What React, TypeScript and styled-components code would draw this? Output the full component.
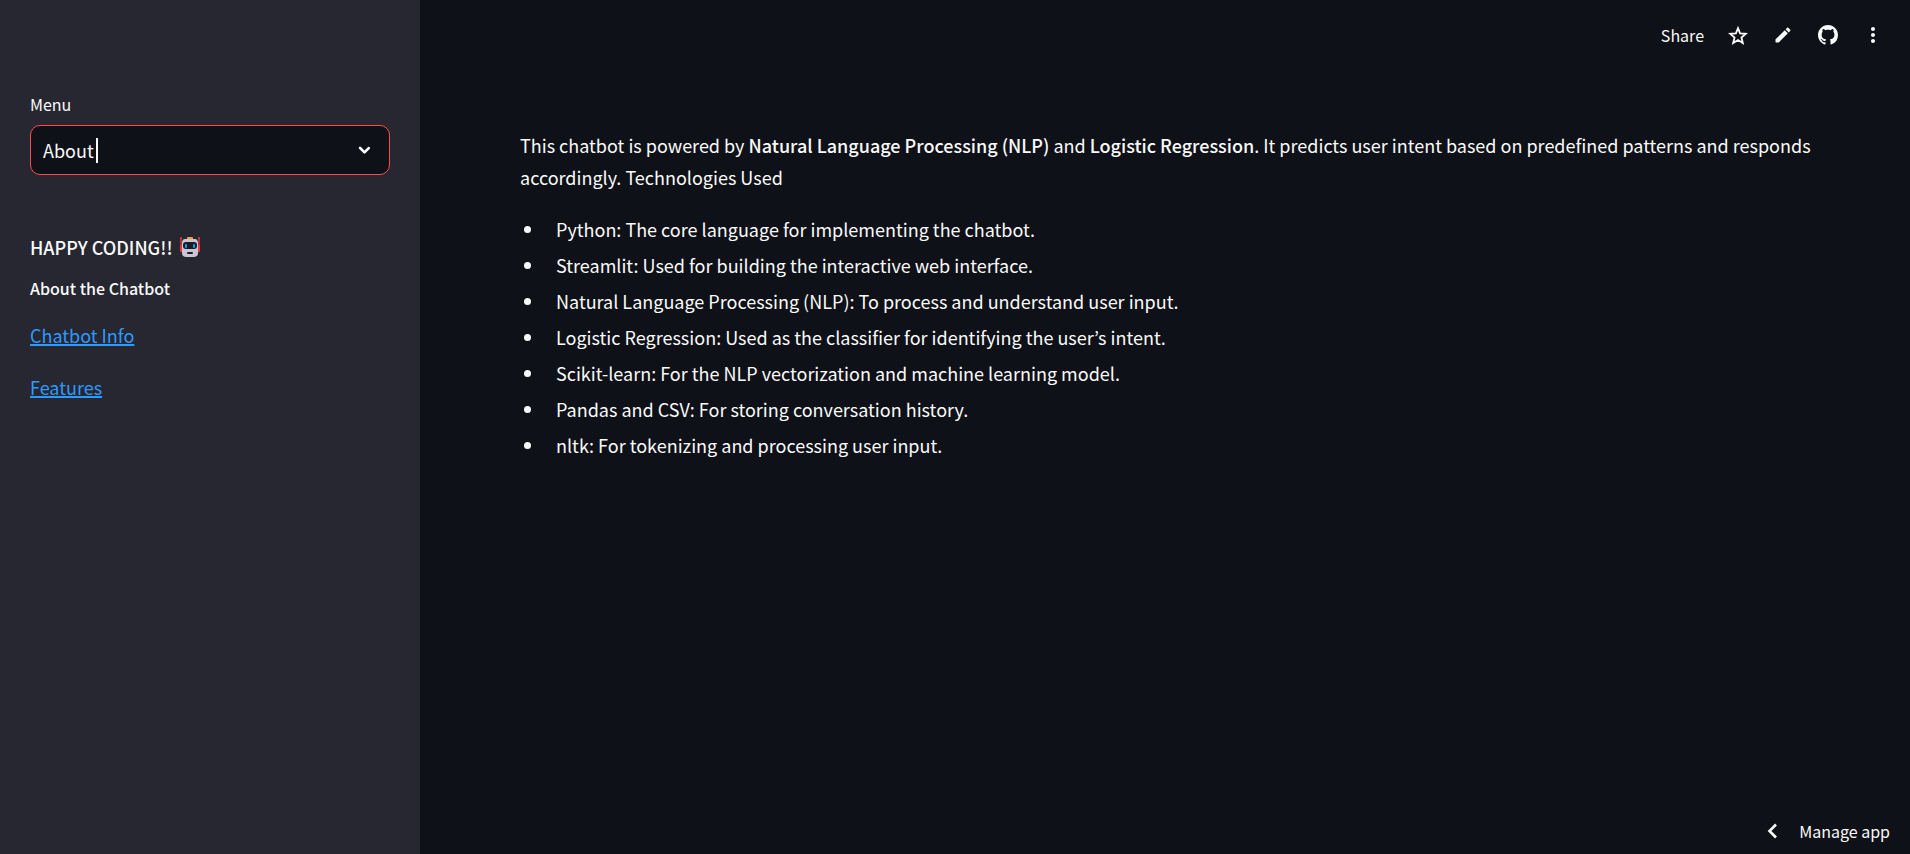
import React, { useState } from "react";
import styled, { createGlobalStyle } from "styled-components";

const GlobalStyle = createGlobalStyle`
  *, *::before, *::after { box-sizing: border-box; }
  body {
    margin: 0;
    background: #0e1117;
    color: #fafafa;
    font-family: "Noto Sans CJK KR", "Noto Sans", sans-serif;
    font-size: 18px;
    line-height: 32px;
  }
  strong { font-weight: 500; }
`;

const Page = styled.div`
  display: grid;
  grid-template-columns: 420px minmax(0, 1fr);
  min-height: 100vh;
`;

const Sidebar = styled.aside`
  display: flex;
  flex-direction: column;
  padding: 92px 30px 40px;
  background: #262730;
`;

const FieldLabel = styled.label`
  margin-bottom: 9px;
  font-size: 16px;
  line-height: 24px;
`;

const SelectBox = styled.div`
  position: relative;
  display: flex;
  margin-bottom: 56px;
`;

const Select = styled.select`
  appearance: none;
  width: 100%;
  height: 50px;
  padding: 0 50px 0 12px;
  border: 1px solid #ff4b4b;
  border-radius: 10px;
  outline: none;
  background: #0e1117;
  color: #fafafa;
  font: inherit;
`;

const TextCaret = styled.span`
  position: absolute;
  top: 13px;
  left: 66px;
  width: 2px;
  height: 25px;
  background: #fafafa;
  pointer-events: none;
`;

const SelectArrow = styled.svg`
  position: absolute;
  top: 13px;
  right: 13px;
  pointer-events: none;
`;

const SidebarTitle = styled.h2`
  display: flex;
  align-items: center;
  gap: 7px;
  margin: 0 0 13px;
  font-size: 18px;
  line-height: 32px;
  font-weight: 500;
`;

const SidebarSubtitle = styled.h3`
  margin: 0 0 19px;
  font-size: 16px;
  line-height: 24px;
  font-weight: 500;
`;

const LinkList = styled.nav`
  display: flex;
  flex-direction: column;
  align-items: flex-start;
  gap: 20px;
`;

const SidebarLink = styled.a`
  color: #2e9aff;
  text-decoration: underline;
  text-decoration-thickness: 2px;
`;

const Main = styled.main`
  display: flex;
  flex-direction: column;
`;

const Toolbar = styled.header`
  display: flex;
  align-items: center;
  justify-content: flex-end;
  gap: 13px;
  height: 70px;
  padding-right: 21px;
`;

const TextButton = styled.button`
  padding: 0;
  margin-right: 5px;
  border: 0;
  background: none;
  color: inherit;
  font: inherit;
  font-size: 16px;
  line-height: 24px;
  cursor: pointer;
`;

const IconButton = styled.button`
  display: grid;
  place-items: center;
  width: 32px;
  height: 32px;
  padding: 0;
  border: 0;
  background: none;
  color: inherit;
  cursor: pointer;
`;

const Article = styled.article`
  padding: 59px 90px 40px 100px;
`;

const Paragraph = styled.p`
  margin: 0 0 16px;
`;

const TechList = styled.ul`
  display: flex;
  flex-direction: column;
  margin: 0;
  padding: 0;
  list-style: none;
`;

const TechItem = styled.li`
  display: flex;
  align-items: center;
  gap: 25px;
  padding: 4px 0 0 4px;

  &::before {
    content: "";
    flex: none;
    width: 7px;
    height: 7px;
    border-radius: 50%;
    background: #fafafa;
  }
`;

const Footer = styled.footer`
  display: flex;
  justify-content: flex-end;
  margin-top: auto;
  padding: 0 20px 11px;
`;

const ManageButton = styled(TextButton)`
  display: flex;
  align-items: center;
  gap: 15px;
  margin: 0;
`;

const RobotIcon = () => (
  <svg width="20" height="20" viewBox="0 0 20 20" aria-hidden="true">
    <path d="M1 1v14M19 1v14" stroke="#e0393e" strokeWidth="1.4" />
    <circle cx="1" cy="1" r="1" fill="#e0393e" />
    <circle cx="19" cy="1" r="1" fill="#e0393e" />
    <rect x="0" y="8" width="3" height="7" rx="1" fill="#e0393e" />
    <rect x="17" y="8" width="3" height="7" rx="1" fill="#e0393e" />
    <rect x="7" y="0" width="6" height="3" rx="1" fill="#f9a22b" />
    <path d="M5 2h10c2 0 3 2 3 4v10c0 3-2 4-4 4H6c-2 0-4-1-4-4V6c0-2 1-4 3-4z" fill="#cdc4d6" />
    <rect x="3" y="5" width="14" height="7" rx="3" fill="#1c1c26" />
    <rect x="5" y="7" width="2" height="4" rx="1" fill="#00a6ed" />
    <rect x="13" y="7" width="2" height="4" rx="1" fill="#00a6ed" />
    <rect x="7" y="15" width="6" height="2" rx="1" fill="#1c1c26" />
  </svg>
);

const technologies = [
  "Python: The core language for implementing the chatbot.",
  "Streamlit: Used for building the interactive web interface.",
  "Natural Language Processing (NLP): To process and understand user input.",
  "Logistic Regression: Used as the classifier for identifying the user’s intent.",
  "Scikit-learn: For the NLP vectorization and machine learning model.",
  "Pandas and CSV: For storing conversation history.",
  "nltk: For tokenizing and processing user input.",
];

export default function App() {
  const [page, setPage] = useState("About");

  return (
    <>
      <GlobalStyle />
      <Page>
        <Sidebar>
          <FieldLabel htmlFor="menu">Menu</FieldLabel>
          <SelectBox>
            <Select id="menu" value={page} onChange={(e) => setPage(e.target.value)}>
              <option>Home</option>
              <option>About</option>
            </Select>
            <TextCaret />
            <SelectArrow width="25" height="25" viewBox="0 0 24 24" fill="#fafafa" aria-hidden="true">
              <path d="M6.8 8.6a1.3 1.3 0 0 1 1.8 0L12 12l3.4-3.4a1.3 1.3 0 0 1 1.8 1.8l-4.3 4.3a1.3 1.3 0 0 1-1.8 0l-4.3-4.3a1.3 1.3 0 0 1 0-1.8z" />
            </SelectArrow>
          </SelectBox>
          <SidebarTitle>
            HAPPY CODING!! <RobotIcon />
          </SidebarTitle>
          <SidebarSubtitle>About the Chatbot</SidebarSubtitle>
          <LinkList>
            <SidebarLink href="#chatbot-info">Chatbot Info</SidebarLink>
            <SidebarLink href="#features">Features</SidebarLink>
          </LinkList>
        </Sidebar>
        <Main>
          <Toolbar>
            <TextButton type="button">Share</TextButton>
            <IconButton type="button" aria-label="Star">
              <svg width="20" height="20" viewBox="1 0 22 22" fill="none" stroke="currentColor" strokeWidth="2">
                <path d="M12 3.5l2.3 5.7 6.2.5-4.7 4 1.5 6.1-5.3-3.3-5.3 3.3 1.5-6.1-4.7-4 6.2-.5z" />
              </svg>
            </IconButton>
            <IconButton type="button" aria-label="Edit">
              <svg width="20" height="20" viewBox="0 0 24 24" fill="currentColor">
                <path d="M3 17.46v3.04c0 .28.22.5.5.5h3.04c.13 0 .26-.05.35-.15L17.81 9.94l-3.75-3.75L3.15 17.1c-.1.1-.15.22-.15.36zM20.71 7.04a1 1 0 0 0 0-1.41l-2.34-2.34a1 1 0 0 0-1.41 0l-1.83 1.83 3.75 3.75 1.83-1.83z" />
              </svg>
            </IconButton>
            <IconButton type="button" aria-label="View on GitHub">
              <svg width="20" height="20" viewBox="0 0 16 16" fill="currentColor">
                <path d="M8 0C3.58 0 0 3.58 0 8c0 3.54 2.29 6.53 5.47 7.59.4.07.55-.17.55-.38 0-.19-.01-.82-.01-1.49-2.01.37-2.53-.49-2.69-.94-.09-.23-.48-.94-.82-1.13-.28-.15-.68-.52-.01-.53.63-.01 1.08.58 1.23.82.72 1.21 1.87.87 2.33.66.07-.52.28-.87.51-1.07-1.78-.2-3.64-.89-3.64-3.95 0-.87.31-1.59.82-2.15-.08-.2-.36-1.02.08-2.12 0 0 .67-.21 2.2.82.64-.18 1.32-.27 2-.27s1.36.09 2 .27c1.53-1.04 2.2-.82 2.2-.82.44 1.1.16 1.92.08 2.12.51.56.82 1.27.82 2.15 0 3.07-1.87 3.75-3.65 3.95.29.25.54.73.54 1.48 0 1.07-.01 1.93-.01 2.2 0 .21.15.46.55.38A8.01 8.01 0 0 0 16 8c0-4.42-3.58-8-8-8z" />
              </svg>
            </IconButton>
            <IconButton type="button" aria-label="More options">
              <svg width="24" height="24" viewBox="0 0 24 24" fill="currentColor">
                <path d="M12 8c1.1 0 2-.9 2-2s-.9-2-2-2-2 .9-2 2 .9 2 2 2zm0 2c-1.1 0-2 .9-2 2s.9 2 2 2 2-.9 2-2-.9-2-2-2zm0 6c-1.1 0-2 .9-2 2s.9 2 2 2 2-.9 2-2-.9-2-2-2z" />
              </svg>
            </IconButton>
          </Toolbar>
          <Article>
            <Paragraph>
              This chatbot is powered by <strong>Natural Language Processing (NLP)</strong> and{" "}
              <strong>Logistic Regression</strong>. It predicts user intent based on predefined
              patterns and responds accordingly. Technologies Used
            </Paragraph>
            <TechList>
              {technologies.map((text) => (
                <TechItem key={text}>{text}</TechItem>
              ))}
            </TechList>
          </Article>
          <Footer>
            <ManageButton type="button">
              <svg width="24" height="24" viewBox="0 0 24 24" fill="none" stroke="currentColor" strokeWidth="2.6" aria-hidden="true">
                <path d="M16 5.5L9.5 12l6.5 6.5" />
              </svg>
              Manage app
            </ManageButton>
          </Footer>
        </Main>
      </Page>
    </>
  );
}
